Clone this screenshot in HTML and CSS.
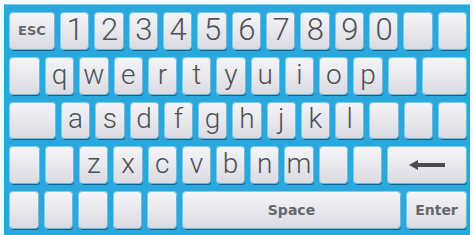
FILE: index.html
```html
<!DOCTYPE html>
<html lang="en">
<head>
    <meta charset="UTF-8">
    <title>On-screen Keyboard</title>
    <link rel="stylesheet" href="styles.css">
</head>
<body>
    <div class="frame">
        <div class="keyboard">
            <div class="row">
                <div class="key key-esc label">ESC</div>
                <div class="key digit">1</div>
                <div class="key digit">2</div>
                <div class="key digit">3</div>
                <div class="key digit">4</div>
                <div class="key digit">5</div>
                <div class="key digit">6</div>
                <div class="key digit">7</div>
                <div class="key digit">8</div>
                <div class="key digit">9</div>
                <div class="key digit">0</div>
                <div class="key"></div>
                <div class="key"></div>
            </div>
            <div class="row">
                <div class="key key-tab"></div>
                <div class="key">q</div>
                <div class="key">w</div>
                <div class="key">e</div>
                <div class="key">r</div>
                <div class="key">t</div>
                <div class="key">y</div>
                <div class="key">u</div>
                <div class="key">i</div>
                <div class="key">o</div>
                <div class="key">p</div>
                <div class="key"></div>
                <div class="key key-wide"></div>
            </div>
            <div class="row">
                <div class="key key-caps"></div>
                <div class="key">a</div>
                <div class="key">s</div>
                <div class="key">d</div>
                <div class="key">f</div>
                <div class="key">g</div>
                <div class="key">h</div>
                <div class="key">j</div>
                <div class="key">k</div>
                <div class="key">l</div>
                <div class="key"></div>
                <div class="key"></div>
                <div class="key"></div>
            </div>
            <div class="row">
                <div class="key key-tab"></div>
                <div class="key"></div>
                <div class="key">z</div>
                <div class="key">x</div>
                <div class="key">c</div>
                <div class="key">v</div>
                <div class="key">b</div>
                <div class="key">n</div>
                <div class="key">m</div>
                <div class="key"></div>
                <div class="key"></div>
                <div class="key key-back">
                    <svg width="36" height="10" viewBox="0 0 36 10">
                        <path d="M0 5 L9 0 L9 3 L36 3 L36 7 L9 7 L9 10 Z" fill="#4a4c52"/>
                    </svg>
                </div>
            </div>
            <div class="row">
                <div class="key"></div>
                <div class="key"></div>
                <div class="key"></div>
                <div class="key"></div>
                <div class="key"></div>
                <div class="key key-space label">Space</div>
                <div class="key key-enter label">Enter</div>
            </div>
        </div>
    </div>
</body>
</html>
```

FILE: styles.css
```css
:root {
    --frame-white: #f4fbfe;
    --board-blue: #2aa8de;
    --key-top: #f5f5f8;
    --key-bottom: #dadbe2;
    --key-text: #4e5056;
    --label-text: #66686c;
}

* {
    margin: 0;
    padding: 0;
    box-sizing: border-box;
}

body {
    width: 473px;
    height: 235px;
    overflow: hidden;
    background-color: var(--frame-white);
}

.frame {
    width: 473px;
    height: 235px;
    padding: 4px 3px 0 4px;
}

.keyboard {
    height: 100%;
    background-color: var(--board-blue);
    box-shadow: inset 0 1px 0 #7fcdef;
    padding: 9px 4px 7px 6px;
    display: flex;
    flex-direction: column;
    gap: 9px;
}

.row {
    display: flex;
    gap: 7px;
    height: 36px;
}

.key {
    flex: 1 1 0;
    min-width: 0;
    display: flex;
    align-items: center;
    justify-content: center;
    border-radius: 3px;
    background: linear-gradient(var(--key-top), var(--key-bottom));
    box-shadow: 0 0 0 1px rgba(160, 222, 246, 0.7), 1px 2px 0 rgba(10, 78, 124, 0.8);
    color: var(--key-text);
    font-family: Roboto, "Liberation Sans", sans-serif;
    font-weight: 300;
    font-size: 28px;
    line-height: 1;
    padding-bottom: 2px;
}

.digit {
    font-size: 31px;
    letter-spacing: -1px;
}

.label {
    font-family: "DejaVu Sans", sans-serif;
    font-weight: bold;
    font-size: 14px;
    color: var(--label-text);
    padding-bottom: 0;
}

.key-esc {
    flex: none;
    width: 44px;
    font-size: 13px;
}

.key-tab {
    flex: none;
    width: 29px;
}

.key-wide {
    flex: none;
    width: 43px;
}

.key-caps {
    flex: none;
    width: 45px;
}

.key-back {
    flex: none;
    width: 78px;
    padding-bottom: 0;
}

.key-space {
    flex: none;
    width: 217px;
}

.key-enter {
    flex: none;
    width: 59px;
}
```
